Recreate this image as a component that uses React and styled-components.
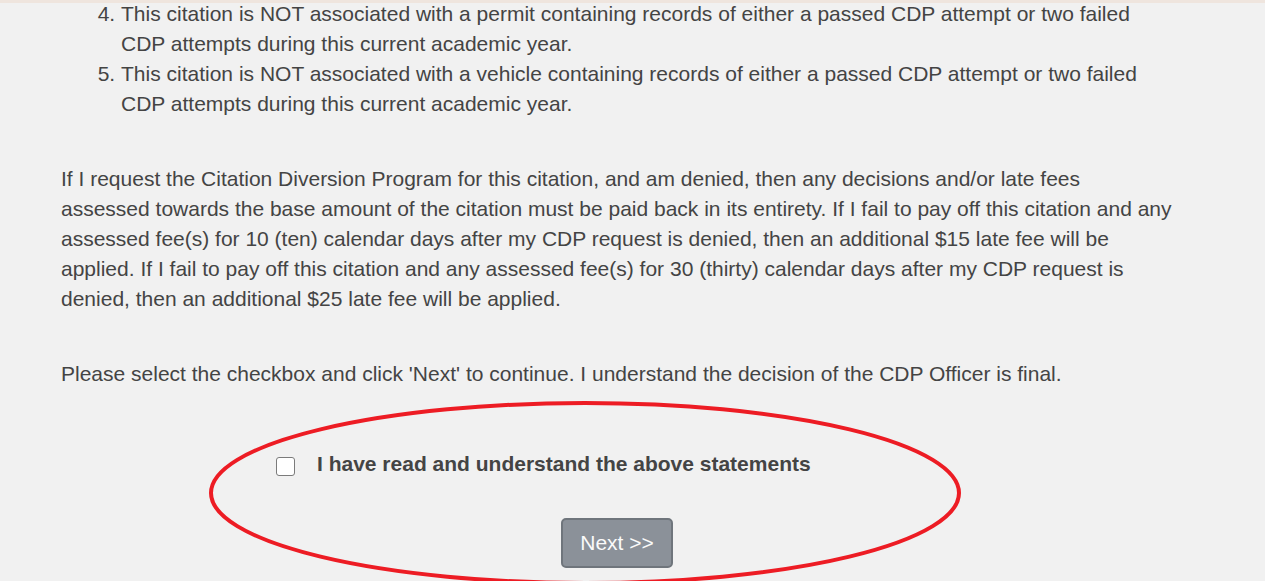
import React from "react";
import styled, { createGlobalStyle } from "styled-components";

const GlobalStyle = createGlobalStyle`
  html, body {
    margin: 0;
    padding: 0;
    background: #f1f1f1;
  }
  body {
    font-family: "Liberation Sans", Arial, sans-serif;
    color: #444;
  }
`;

const Page = styled.div`
  position: relative;
  height: 581px;
  overflow: hidden;
  border-top: 3px solid #efe5de;
  box-sizing: border-box;
`;

const Content = styled.div`
  padding: 0 20px 0 61px;
  margin-top: -4px;
  font-size: 21px;
  line-height: 30px;
  white-space: nowrap;
`;

const Steps = styled.ol`
  margin: 0;
  padding-left: 60px;
`;

const Step = styled.li``;

const Paragraph = styled.p`
  margin: 45px 0 0;
`;

const AgreeRow = styled.label`
  display: flex;
  align-items: flex-start;
  gap: 22px;
  margin: 60px 0 0 215px;
  font-weight: bold;
  cursor: pointer;
`;

const Check = styled.input.attrs({ type: "checkbox" })`
  appearance: none;
  -webkit-appearance: none;
  margin: 8px 0 0;
  width: 19px;
  height: 19px;
  box-sizing: border-box;
  border: 1px solid #7b7b7b;
  border-radius: 3px;
  background: #fff;
  flex: none;
`;

const ButtonRow = styled.div`
  display: flex;
  margin: 39px 0 0 500px;
`;

const NextButton = styled.button`
  width: 112px;
  height: 50px;
  box-sizing: border-box;
  background: #8b9199;
  border: 2px solid #6f757c;
  border-radius: 5px;
  color: #fafafa;
  font-family: "Liberation Sans", Arial, sans-serif;
  font-size: 21px;
  padding: 0;
`;

const Annotation = styled.svg`
  position: absolute;
  left: 209px;
  top: 395px;
  width: 752px;
  height: 186px;
  pointer-events: none;
`;

export default function App() {
  return (
    <>
      <GlobalStyle />
      <Page>
        <Content>
          <Steps start={4}>
            <Step>
              This citation is NOT associated with a permit containing records of either a passed CDP attempt or two failed
              <br />
              CDP attempts during this current academic year.
            </Step>
            <Step>
              This citation is NOT associated with a vehicle containing records of either a passed CDP attempt or two failed
              <br />
              CDP attempts during this current academic year.
            </Step>
          </Steps>
          <Paragraph>
            If I request the Citation Diversion Program for this citation, and am denied, then any decisions and/or late fees
            <br />
            assessed towards the base amount of the citation must be paid back in its entirety. If I fail to pay off this citation and any
            <br />
            assessed fee(s) for 10 (ten) calendar days after my CDP request is denied, then an additional $15 late fee will be
            <br />
            applied. If I fail to pay off this citation and any assessed fee(s) for 30 (thirty) calendar days after my CDP request is
            <br />
            denied, then an additional $25 late fee will be applied.
          </Paragraph>
          <Paragraph>
            Please select the checkbox and click 'Next' to continue. I understand the decision of the CDP Officer is final.
          </Paragraph>
          <AgreeRow>
            <Check />
            <span>I have read and understand the above statements</span>
          </AgreeRow>
          <ButtonRow>
            <NextButton>Next &gt;&gt;</NextButton>
          </ButtonRow>
        </Content>
        <Annotation viewBox="0 0 752 186">
          <ellipse cx="376" cy="95" rx="374" ry="90" fill="none" stroke="#ed1c24" strokeWidth="4" />
        </Annotation>
      </Page>
    </>
  );
}
